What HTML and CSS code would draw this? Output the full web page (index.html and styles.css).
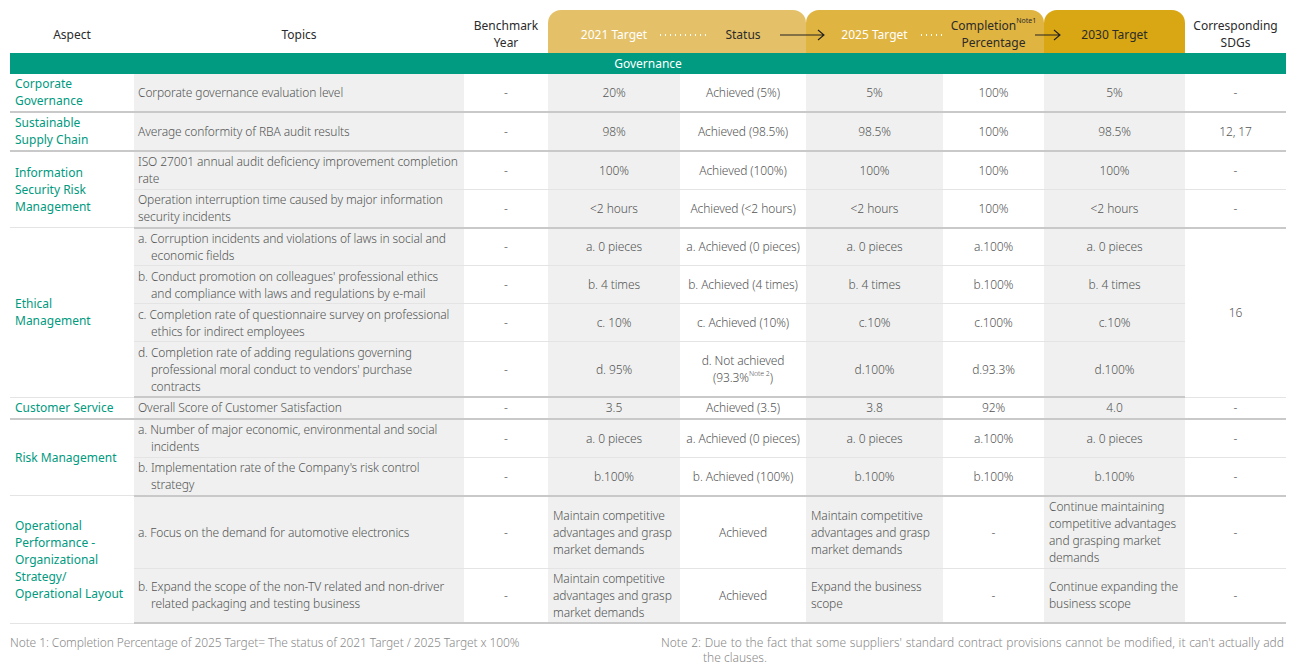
FILE: index.html
```html
<!DOCTYPE html>
<html lang="en">
<head>
<meta charset="utf-8">
<title>Governance Targets</title>
<link rel="stylesheet" href="styles.css">
</head>
<body>
<table class="kpi">
  <colgroup>
    <col class="w-aspect"><col class="w-topic"><col class="w-bench"><col class="w-t21"><col class="w-status"><col class="w-t25"><col class="w-comp"><col class="w-t30"><col class="w-sdg">
  </colgroup>
  <thead>
    <tr class="head">
      <th>Aspect</th>
      <th>Topics</th>
      <th>Benchmark<br>Year</th>
      <th class="tab1 tab-l light">2021 Target<span class="dots dots1"></span></th>
      <th class="tab1 tab-r">Status<span class="arrow arrow1"><svg viewBox="0 0 46 12" width="46" height="12"><path d="M0 6H44M38 1L44 6L38 11" fill="none" stroke="#222" stroke-width="1.1"/></svg></span></th>
      <th class="tab2 tab-l light">2025 Target<span class="dots dots2"></span></th>
      <th class="tab2 tab-r">Completion<sup>Note1</sup><br>Percentage<span class="arrow arrow2"><svg viewBox="0 0 27 12" width="27" height="12"><path d="M0 6H25M19 1L25 6L19 11" fill="none" stroke="#222" stroke-width="1.1"/></svg></span></th>
      <th class="tab3 tab-l tab-r">2030 Target</th>
      <th>Corresponding<br>SDGs</th>
    </tr>
  </thead>
  <tbody>
    <tr class="section"><td colspan="9">Governance</td></tr>

    <tr class="grp">
      <td class="aspect">Corporate<br>Governance</td>
      <td class="topic g">Corporate governance evaluation level</td>
      <td class="c">-</td>
      <td class="c g">20%</td>
      <td class="c">Achieved (5%)</td>
      <td class="c g">5%</td>
      <td class="c">100%</td>
      <td class="c g">5%</td>
      <td class="c">-</td>
    </tr>

    <tr class="grp">
      <td class="aspect">Sustainable<br>Supply Chain</td>
      <td class="topic g">Average conformity of RBA audit results</td>
      <td class="c">-</td>
      <td class="c g">98%</td>
      <td class="c">Achieved (98.5%)</td>
      <td class="c g">98.5%</td>
      <td class="c">100%</td>
      <td class="c g">98.5%</td>
      <td class="c">12, 17</td>
    </tr>

    <tr class="sub">
      <td class="aspect" rowspan="2">Information<br>Security Risk<br>Management</td>
      <td class="topic g">ISO 27001 annual audit deficiency improvement completion<br>rate</td>
      <td class="c">-</td>
      <td class="c g">100%</td>
      <td class="c">Achieved (100%)</td>
      <td class="c g">100%</td>
      <td class="c">100%</td>
      <td class="c g">100%</td>
      <td class="c">-</td>
    </tr>
    <tr class="grp">
      <td class="topic g">Operation interruption time caused by major information<br>security incidents</td>
      <td class="c">-</td>
      <td class="c g">&lt;2 hours</td>
      <td class="c">Achieved (&lt;2 hours)</td>
      <td class="c g">&lt;2 hours</td>
      <td class="c">100%</td>
      <td class="c g">&lt;2 hours</td>
      <td class="c">-</td>
    </tr>

    <tr class="sub">
      <td class="aspect" rowspan="4">Ethical<br>Management</td>
      <td class="topic hang g">a. Corruption incidents and violations of laws in social and<br>economic fields</td>
      <td class="c">-</td>
      <td class="c g">a. 0 pieces</td>
      <td class="c">a. Achieved (0 pieces)</td>
      <td class="c g">a. 0 pieces</td>
      <td class="c">a.100%</td>
      <td class="c g">a. 0 pieces</td>
      <td class="c sdg-span" rowspan="4">16</td>
    </tr>
    <tr class="sub">
      <td class="topic hang g">b. Conduct promotion on colleagues' professional ethics<br>and compliance with laws and regulations by e-mail</td>
      <td class="c">-</td>
      <td class="c g">b. 4 times</td>
      <td class="c">b. Achieved (4 times)</td>
      <td class="c g">b. 4 times</td>
      <td class="c">b.100%</td>
      <td class="c g">b. 4 times</td>
    </tr>
    <tr class="sub">
      <td class="topic hang g">c. Completion rate of questionnaire survey on professional<br>ethics for indirect employees</td>
      <td class="c">-</td>
      <td class="c g">c. 10%</td>
      <td class="c">c. Achieved (10%)</td>
      <td class="c g">c.10%</td>
      <td class="c">c.100%</td>
      <td class="c g">c.10%</td>
    </tr>
    <tr class="grp">
      <td class="topic hang g">d. Completion rate of adding regulations governing<br>professional moral conduct to vendors' purchase<br>contracts</td>
      <td class="c">-</td>
      <td class="c g">d. 95%</td>
      <td class="c">d. Not achieved<br>(93.3%<sup>Note 2</sup>)</td>
      <td class="c g">d.100%</td>
      <td class="c">d.93.3%</td>
      <td class="c g">d.100%</td>
    </tr>

    <tr class="grp">
      <td class="aspect">Customer Service</td>
      <td class="topic g">Overall Score of Customer Satisfaction</td>
      <td class="c">-</td>
      <td class="c g">3.5</td>
      <td class="c">Achieved (3.5)</td>
      <td class="c g">3.8</td>
      <td class="c">92%</td>
      <td class="c g">4.0</td>
      <td class="c">-</td>
    </tr>

    <tr class="sub">
      <td class="aspect" rowspan="2">Risk Management</td>
      <td class="topic hang g">a. Number of major economic, environmental and social<br>incidents</td>
      <td class="c">-</td>
      <td class="c g">a. 0 pieces</td>
      <td class="c">a. Achieved (0 pieces)</td>
      <td class="c g">a. 0 pieces</td>
      <td class="c">a.100%</td>
      <td class="c g">a. 0 pieces</td>
      <td class="c">-</td>
    </tr>
    <tr class="grp">
      <td class="topic hang g">b. Implementation rate of the Company's risk control<br>strategy</td>
      <td class="c">-</td>
      <td class="c g">b.100%</td>
      <td class="c">b. Achieved (100%)</td>
      <td class="c g">b.100%</td>
      <td class="c">b.100%</td>
      <td class="c g">b.100%</td>
      <td class="c">-</td>
    </tr>

    <tr class="sub">
      <td class="aspect" rowspan="2">Operational<br>Performance -<br>Organizational<br>Strategy/<br>Operational Layout</td>
      <td class="topic hang g">a. Focus on the demand for automotive electronics</td>
      <td class="c">-</td>
      <td class="l g">Maintain competitive<br>advantages and grasp<br>market demands</td>
      <td class="c">Achieved</td>
      <td class="l g">Maintain competitive<br>advantages and grasp<br>market demands</td>
      <td class="c">-</td>
      <td class="l g">Continue maintaining<br>competitive advantages<br>and grasping market<br>demands</td>
      <td class="c">-</td>
    </tr>
    <tr class="grp">
      <td class="topic hang g">b. Expand the scope of the non-TV related and non-driver<br>related packaging and testing business</td>
      <td class="c">-</td>
      <td class="l g">Maintain competitive<br>advantages and grasp<br>market demands</td>
      <td class="c">Achieved</td>
      <td class="l g">Expand the business<br>scope</td>
      <td class="c">-</td>
      <td class="l g">Continue expanding the<br>business scope</td>
      <td class="c">-</td>
    </tr>
  </tbody>
</table>

<div class="notes">
  <p class="note note1">Note 1: Completion Percentage of 2025 Target= The status of 2021 Target / 2025 Target x 100%</p>
  <p class="note note2">Note 2: Due to the fact that some suppliers' standard contract provisions cannot be modified, it can't actually add the clauses.</p>
</div>
</body>
</html>
```

FILE: styles.css
```css
html, body {
  background: #ffffff;
}

body {
  margin: 10px 14px 0 10px;
  font-family: "Noto Sans", "Open Sans", sans-serif;
  font-weight: 300;
  font-size: 12px;
  letter-spacing: -0.1px;
  color: #555555;
}

.kpi {
  border-collapse: collapse;
  table-layout: fixed;
  width: 1276px;
}

.w-aspect { width: 124px; }
.w-topic { width: 330px; }
.w-bench { width: 84px; }
.w-t21 { width: 132px; }
.w-status { width: 126px; }
.w-t25 { width: 137px; }
.w-comp { width: 101px; }
.w-t30 { width: 141px; }
.w-sdg { width: 101px; }

/* header */
.head th {
  height: 38px;
  padding: 5px 2px 0;
  font-weight: 400;
  line-height: 17px;
  letter-spacing: 0;
  color: #2b2b2b;
  text-align: center;
  vertical-align: middle;
  background: #ffffff;
  position: relative;
  white-space: nowrap;
}

.head th.tab1 { background: #e4c168; }
.head th.tab2 { background: #e0b441; }
.head th.tab3 { background: #d8a713; }
.head th.light { color: #ffffff; }
.head th.tab-l { border-top-left-radius: 13px; }
.head th.tab-r { border-top-right-radius: 13px; }

.head sup {
  font-size: 7px;
  line-height: 0;
  vertical-align: 7px;
}

.dots {
  position: absolute;
  top: 24px;
  height: 1.5px;
  z-index: 3;
  background-image: linear-gradient(to right, rgba(255, 255, 255, 0.95) 1.5px, transparent 1.5px);
  background-size: 5px 1.5px;
  background-repeat: repeat-x;
}
.dots1 { left: 112px; width: 48px; }
.dots2 { left: 115px; width: 24px; }

.arrow {
  position: absolute;
  top: 19px;
  display: block;
  height: 12px;
  z-index: 3;
}
.arrow svg { display: block; }
.arrow1 { left: 100px; }
.arrow2 { left: 92px; }

/* body cells */
.kpi tbody td {
  padding: 1.45px 4px;
  line-height: 17px;
  vertical-align: middle;
  background: #ffffff;
}

/* section bar */
.kpi tbody tr.section td {
  height: 21px;
  padding: 0;
  background: #009b81;
  color: #ffffff;
  font-weight: 400;
  letter-spacing: 0;
  text-align: center;
  line-height: 21px;
}

.kpi tbody tr.grp td { border-bottom: 2px solid #c9c9c9; }
.kpi tbody tr.sub td { border-bottom: 1px solid #e4e4e4; }
.kpi tbody td.aspect,
.kpi tbody td.sdg-span { border-bottom: 2px solid #c9c9c9; }

.kpi tbody td.g { background: #eff0ef; }

.kpi tbody td.aspect {
  color: #009a80;
  font-weight: 400;
  letter-spacing: 0;
  padding-left: 5px;
}

.kpi tbody td.topic {
  text-align: left;
  white-space: nowrap;
  padding-right: 0;
}
.kpi tbody td.hang {
  padding-left: 17px;
  text-indent: -13px;
}

.c { text-align: center; }
.kpi tbody td.l { text-align: left; padding-left: 5px; }

.kpi tbody sup {
  font-size: 7px;
  line-height: 0;
  vertical-align: 6px;
}

/* notes */
.notes {
  display: flex;
  margin-top: 11px;
  color: #8a8a8a;
  font-size: 12px;
  line-height: 15px;
}

.note { margin: 0; }
.note1 { width: 651px; flex: none; }
.note2 {
  flex: 1;
  padding-left: 42px;
  padding-right: 2px;
  text-indent: -42px;
  text-align: justify;
  letter-spacing: 0;
}
```
